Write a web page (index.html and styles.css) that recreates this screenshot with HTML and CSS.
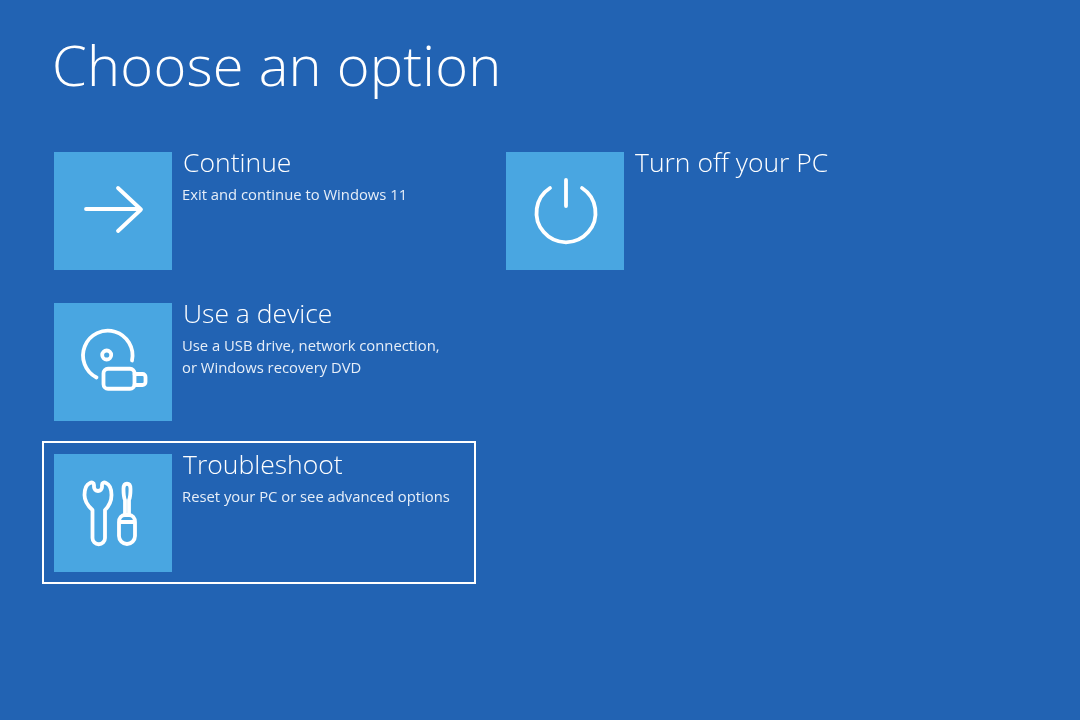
FILE: index.html
```html
<!DOCTYPE html>
<html lang="en">
<head>
    <meta charset="UTF-8">
    <meta name="viewport" content="width=device-width, initial-scale=1.0">
    <title>Choose an option</title>
    <link rel="stylesheet" href="styles.css">
</head>
<body>
    <h1>Choose an option</h1>
    <div class="options">
        <div class="option">
            <div class="tile">
                <svg class="icon" viewBox="0 0 118 118">
                    <path d="M32 57H86M64 36L87 57.500L64 79"/>
                </svg>
            </div>
            <div class="text">
                <h2>Continue</h2>
                <p>Exit and continue to Windows 11</p>
            </div>
        </div>
        <div class="option">
            <div class="tile">
                <svg class="icon" viewBox="0 0 118 118">
                    <path d="M44 36A29.500 29.500 0 1 0 76 36M60 28V54"/>
                </svg>
            </div>
            <div class="text">
                <h2>Turn off your PC</h2>
            </div>
        </div>
        <div class="option">
            <div class="tile">
                <svg class="icon" viewBox="0 0 118 118">
                    <path d="M42.500 74.500A24.750 24.750 0 1 1 78 57.500"/>
                    <circle cx="52.700" cy="52" r="4.500"/>
                    <rect x="49.500" y="65.750" width="31" height="20" rx="4.500"/>
                    <path d="M80.500 71H88.500A3 3 0 0 1 91.500 74V79A3 3 0 0 1 88.500 82H80.500"/>
                </svg>
            </div>
            <div class="text">
                <h2>Use a device</h2>
                <p>Use a USB drive, network connection,<br>or Windows recovery DVD</p>
            </div>
        </div>
        <div class="option"></div>
        <div class="option option-focus">
            <div class="tile">
                <svg class="icon" viewBox="0 0 118 118">
                    <path d="M40 33V31C40 28.500 38 28 36 29C32.500 30.500 30.500 35.500 30.500 41C30.500 48 34 52 38.500 56V84A6.250 6.250 0 0 0 51 84V56C55 52 57.500 48 57.500 41C57.500 35.500 55.500 30.500 52 29C50 28 48 28.500 48 31V33A4 4 0 0 1 40 33Z"/>
                    <path d="M71 61V46C70 44 69.500 41 69.500 35C69.500 31.500 71 29.750 73 29.750C75 29.750 76.500 31.500 76.500 35C76.500 41 76 44 75 46V61"/>
                    <path d="M71 61H75C78.500 61 81 64 81 68V82A8 8 0 0 1 65 82V68C65 64 67.500 61 71 61ZM65 68H81"/>
                </svg>
            </div>
            <div class="text">
                <h2>Troubleshoot</h2>
                <p>Reset your PC or see advanced options</p>
            </div>
        </div>
    </div>
</body>
</html>
```

FILE: styles.css
```css
body {
    font-family: "Open Sans", "Liberation Sans", sans-serif;
    background-color: #2263b3;
    color: #fff;
    margin: 0;
    padding: 0;
    height: 720px;
    overflow: hidden;
}
h1 {
    font-size: 56px;
    font-weight: 300;
    letter-spacing: 0.25px;
    line-height: 76px;
    margin: 0;
    padding: 26px 0 0 52px;
    height: 109px;
    box-sizing: border-box;
    filter: blur(0.5px);
}
.options {
    display: grid;
    grid-template-columns: 434px 434px;
    grid-auto-rows: 143px;
    column-gap: 18px;
    row-gap: 8px;
    margin: 30px 0 0 42px;
    filter: blur(0.5px);
}
.option {
    display: flex;
    gap: 10px;
    padding: 11px 10px;
    border: 2px solid transparent;
    box-sizing: border-box;
}
.option-focus {
    border-color: #fff;
}
.tile {
    width: 118px;
    height: 118px;
    flex-shrink: 0;
    background-color: #49a6e1;
}
.icon {
    display: block;
    width: 118px;
    height: 118px;
    fill: none;
    stroke: #fff;
    stroke-width: 3.800;
    stroke-linecap: round;
    stroke-linejoin: round;
}
h2 {
    font-size: 26.500px;
    font-weight: 300;
    line-height: 32px;
    margin: -6px 0 0 1px;
}
p {
    font-size: 14.800px;
    line-height: 22px;
    margin: 5px 0 0;
    color: #e6eef8;
}
```
